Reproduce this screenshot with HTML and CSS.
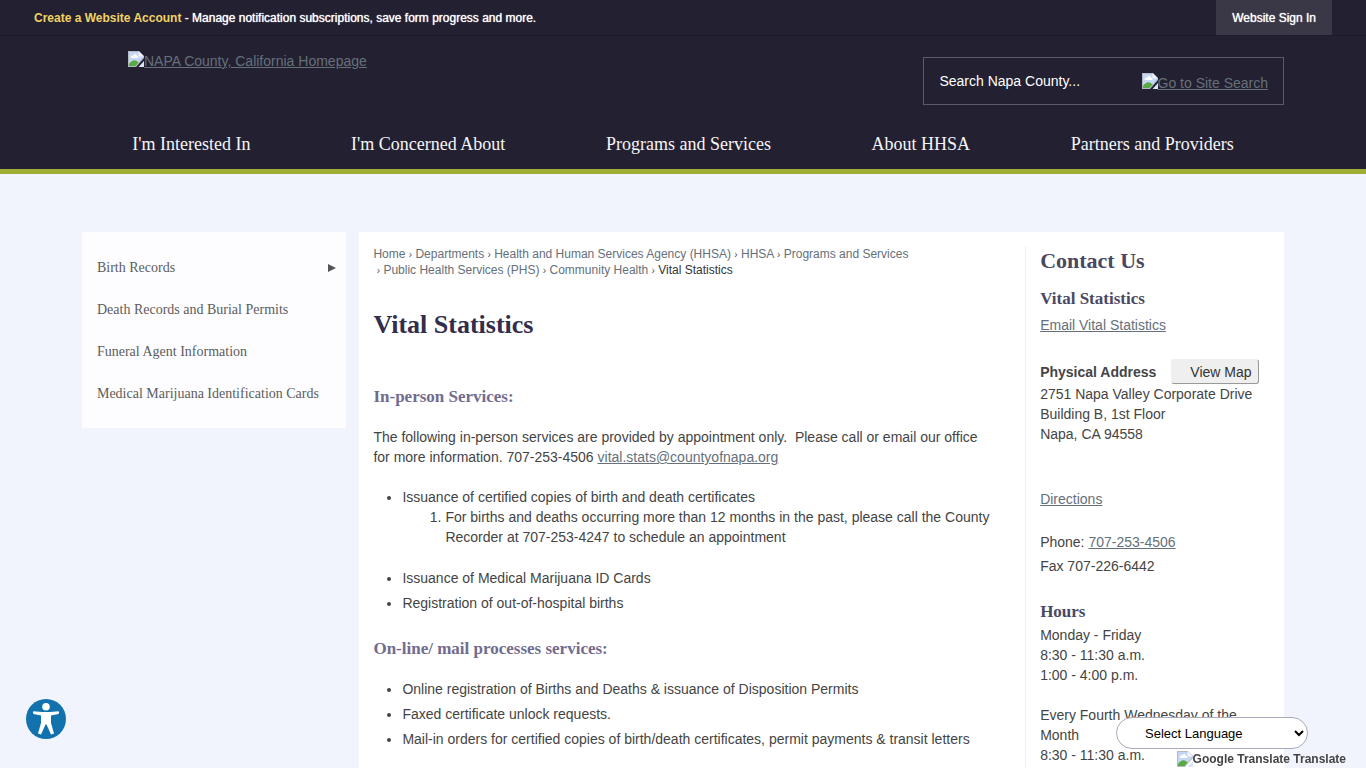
FILE: index.html
```html
<!DOCTYPE html>
<html lang="en">
<head>
    <meta charset="UTF-8">
    <meta name="viewport" content="width=device-width, initial-scale=1.0">
    <title>Vital Statistics | Napa County, CA</title>
    <link rel="stylesheet" href="styles.css">
</head>
<body>
    <svg width="0" height="0" class="sprite" aria-hidden="true">
        <symbol id="missing" viewBox="0 0 16 16">
            <path d="M0 0h11l5 5v2L8 16H0z" fill="#b4bac2"/>
            <path d="M1 1h9.500l4.500 4.500v1L7.500 15H1z" fill="#c4d7f6"/>
            <path d="M3 7c-1-2 1-3 2-2 1-3 4-2 4 0 2 0 2 2 0 2z" fill="#fff"/>
            <path d="M1 15v-2c3-4 6-5 9.500-1.500L7.500 15z" fill="#58aa43"/>
            <path d="M10.500 0v5.500H16z" fill="#f4f6fa"/>
            <path d="M16 10v6h-5.500z" fill="#dfe5ec"/>
        </symbol>
    </svg>

    <div class="topbar">
        <p><a href="#">Create a Website Account</a> - Manage notification subscriptions, save form progress and more.</p>
        <a class="signin" href="#">Website Sign In</a>
    </div>

    <header>
        <div class="banner">
            <a class="missing-link logo" href="#"><svg><use href="#missing"/></svg>NAPA County, California Homepage</a>
            <form class="search">
                <input type="text" placeholder="Search Napa County..." aria-label="Search Napa County">
                <a class="missing-link" href="#"><svg><use href="#missing"/></svg>Go to Site Search</a>
            </form>
        </div>
        <nav class="main-nav">
            <a href="#">I'm Interested In</a>
            <a href="#">I'm Concerned About</a>
            <a href="#">Programs and Services</a>
            <a href="#">About HHSA</a>
            <a href="#">Partners and Providers</a>
        </nav>
    </header>

    <div class="container">
        <nav class="side-nav">
            <a href="#">Birth Records <svg class="arrow" viewBox="0 0 8 8"><path d="M0 0l8 4-8 4z"/></svg></a>
            <a href="#">Death Records and Burial Permits</a>
            <a href="#">Funeral Agent Information</a>
            <a href="#">Medical Marijuana Identification Cards</a>
        </nav>

        <div class="panel">
            <main>
                <div class="breadcrumbs">
                    <a href="#">Home</a> <i>›</i> <a href="#">Departments</a> <i>›</i> <a href="#">Health and Human Services Agency (HHSA)</a> <i>›</i> <a href="#">HHSA</a> <i>›</i> <a href="#">Programs and Services</a><br>
                    &nbsp;<i>›</i> <a href="#">Public Health Services (PHS)</a> <i>›</i> <a href="#">Community Health</a> <i>›</i> <span>Vital Statistics</span>
                </div>
                <h1>Vital Statistics</h1>

                <h2>In-person Services:</h2>
                <p>The following in-person services are provided by appointment only.&nbsp; Please call or email our office for more information. 707-253-4506 <a href="#">vital.stats@countyofnapa.org</a></p>
                <ul>
                    <li>Issuance of certified copies of birth and death certificates
                        <ol>
                            <li>For births and deaths occurring more than 12 months in the past, please call the County Recorder at 707-253-4247 to schedule an appointment</li>
                        </ol>
                    </li>
                    <li>Issuance of Medical Marijuana ID Cards</li>
                    <li>Registration of out-of-hospital births</li>
                </ul>

                <h2>On-line/ mail processes services:</h2>
                <ul>
                    <li>Online registration of Births and Deaths &amp; issuance of Disposition Permits</li>
                    <li>Faxed certificate unlock requests.</li>
                    <li>Mail-in orders for certified copies of birth/death certificates, permit payments &amp; transit letters</li>
                </ul>
            </main>

            <aside>
                <h2>Contact Us</h2>
                <h3>Vital Statistics</h3>
                <a href="#">Email Vital Statistics</a>
                <div class="address">
                    <div class="address-title"><strong>Physical Address</strong><button type="button">View Map</button></div>
                    2751 Napa Valley Corporate Drive<br>
                    Building B, 1st Floor<br>
                    Napa, CA 94558
                </div>
                <a href="#">Directions</a>
                <div class="phone">Phone: <a href="#">707-253-4506</a><br>Fax 707-226-6442</div>
                <h3>Hours</h3>
                <p>Monday - Friday<br>8:30 - 11:30 a.m.<br>1:00 - 4:00 p.m.</p>
                <p>Every Fourth Wednesday of the Month<br>8:30 - 11:30 a.m.</p>
            </aside>
        </div>
    </div>

    <button class="accessibility" type="button" aria-label="Accessibility options">
        <svg viewBox="0 0 40 40">
            <circle cx="20" cy="20" r="20" fill="#1172ae"/>
            <circle cx="20" cy="7.800" r="3.800" fill="#fff"/>
            <path d="M7.500 12.300l8.500.7h8l8.500-.7q1.300 1.300 0 2.700l-7.500 1.500v7.500l3 10.500-3 1-4.500-10h-1l-4.500 10-3-1 3-10.500v-7.500L7.500 15q-1.300-1.400 0-2.700z" fill="#fff"/>
        </svg>
    </button>

    <div class="translate">
        <select aria-label="Select Language">
            <option>Select Language</option>
        </select>
        <div class="translate-credit"><svg><use href="#missing"/></svg>Google Translate Translate</div>
    </div>
</body>
</html>
```

FILE: styles.css
```css
* {
    box-sizing: border-box;
}
body {
    margin: 0;
    min-height: 100vh;
    display: flex;
    flex-direction: column;
    font-family: "Liberation Sans", Arial, sans-serif;
    font-size: 14px;
    line-height: 20px;
    color: #444;
    background: #f2f4fd;
}
a {
    color: #65707a;
}
.sprite {
    position: absolute;
}
.topbar {
    display: flex;
    justify-content: space-between;
    height: 36px;
    padding: 0 34px;
    background: #232031;
    border-bottom: 1px solid #1d1b2a;
    color: #fff;
    font-size: 12px;
    line-height: 36px;
    text-shadow: 0 0 1px #fff;
}
.topbar p {
    margin: 0;
}
.topbar a {
    color: #f0d264;
    font-weight: bold;
    text-decoration: none;
    text-shadow: none;
}
.topbar .signin {
    padding: 0 16px;
    background: #3a3747;
    color: #fff;
    font-weight: normal;
    text-shadow: 0 0 1px #fff;
}
header {
    background: #232031;
    border-bottom: 5px solid #9eae37;
}
.banner,
.main-nav,
.container {
    width: 88%;
    margin: 0 auto;
}
.banner {
    display: flex;
    justify-content: space-between;
    align-items: flex-start;
    height: 84px;
}
.missing-link {
    display: flex;
    white-space: nowrap;
}
.missing-link svg,
.translate-credit svg {
    width: 16px;
    height: 16px;
    flex: none;
}
.logo {
    margin: 15px 0 0 46px;
}
.search {
    display: flex;
    justify-content: space-between;
    align-items: center;
    width: 30%;
    height: 48px;
    margin-top: 21px;
    padding: 0 15px;
    border: 1px solid #5c5870;
}
.search input {
    flex: 1;
    min-width: 0;
    padding: 0;
    border: 0;
    outline: 0;
    background: none;
    color: #fff;
    font: inherit;
}
.search input::placeholder {
    color: #fff;
    opacity: 1;
}
.search .missing-link {
    padding-top: 4px;
}
.main-nav {
    display: flex;
    justify-content: space-around;
    height: 49px;
}
.main-nav a {
    color: #f5f5f8;
    font-family: "Liberation Serif", "Times New Roman", serif;
    font-size: 18px;
    line-height: 49px;
    text-decoration: none;
}
.container {
    flex: 1;
    display: flex;
    gap: 13px;
    padding-top: 58px;
}
.side-nav {
    width: 22%;
    align-self: flex-start;
    padding: 15px 10px 13px 15px;
    background: #fdfdff;
}
.side-nav a {
    display: flex;
    justify-content: space-between;
    align-items: center;
    color: #5c5c5c;
    font-family: "Liberation Serif", "Times New Roman", serif;
    font-size: 14px;
    line-height: 42px;
    text-decoration: none;
}
.arrow {
    width: 8px;
    height: 8px;
    fill: #555;
}
.panel {
    flex: 1;
    display: flex;
    background: #fff;
    padding-top: 14px;
}
main {
    flex: 1;
    padding: 0 14px;
}
.breadcrumbs {
    font-size: 12px;
    line-height: 16px;
    color: #555;
}
.breadcrumbs a {
    text-decoration: none;
}
.breadcrumbs i {
    font-size: 10px;
    font-style: normal;
    line-height: 10px;
}
.breadcrumbs span {
    color: #333;
}
h1,
h2,
h3 {
    font-family: "Liberation Serif", "Times New Roman", serif;
    color: #4a4862;
}
h1 {
    margin: 32px 0 47px;
    font-size: 26px;
    line-height: 30px;
    color: #322d4b;
}
main h2 {
    margin: 20px 0;
    font-size: 17px;
    line-height: 20px;
    color: #716c8f;
}
main p {
    margin: 20px 0;
    padding-right: 16px;
}
main ul {
    margin: 20px 0 26px;
    padding-left: 29px;
}
main ol {
    margin: 0 0 21px;
    padding-left: 43px;
}
main li {
    margin-bottom: 5px;
}
main ol li {
    margin-bottom: 0;
}
main ul > li:last-child {
    margin-bottom: 0;
}
aside {
    width: 28%;
    padding: 0 24px 0 14px;
    border-left: 1px solid #eeeef4;
}
aside h2 {
    margin: 2px 0 15px;
    font-size: 22px;
    line-height: 26px;
}
aside h3 {
    margin: 0 0 6px;
    font-size: 17px;
    line-height: 20px;
}
.address {
    margin: 24px 0 45px;
}
.address-title {
    display: flex;
    align-items: center;
    gap: 15px;
}
.address button {
    height: 25px;
    padding: 0 6px 0 18px;
    border: 1px solid #efefef;
    border-right-color: #999;
    border-bottom-color: #999;
    border-radius: 3px;
    background: #efefef;
    color: #333;
    font: inherit;
    white-space: nowrap;
}
.phone {
    margin: 21px 0 24px;
    line-height: 24px;
}
.phone + h3 {
    margin-bottom: 3px;
}
aside p {
    margin: 0 0 20px;
}
.accessibility {
    position: fixed;
    left: 26px;
    bottom: 29px;
    width: 40px;
    height: 40px;
    padding: 0;
    border: 0;
    border-radius: 50%;
    background: none;
    cursor: pointer;
}
.accessibility svg {
    display: block;
}
.translate {
    position: fixed;
    right: 20px;
    bottom: 0;
    width: 230px;
}
.translate select {
    display: block;
    width: 192px;
    height: 32px;
    padding: 0 0 0 24px;
    border: 1px solid #aaa9bb;
    border-radius: 16px;
    background: #fff;
    color: #000;
    font-family: inherit;
    font-size: 13px;
}
.translate-credit {
    display: flex;
    justify-content: flex-end;
    height: 19px;
    padding-top: 2px;
    font-size: 12px;
    font-weight: bold;
    line-height: 16px;
}
@media (max-width: 768px) {
    .banner,
    .container,
    .panel {
        flex-direction: column;
        height: auto;
    }
    .search,
    .side-nav,
    aside {
        width: 100%;
    }
    .main-nav {
        flex-wrap: wrap;
        height: auto;
    }
}
```
